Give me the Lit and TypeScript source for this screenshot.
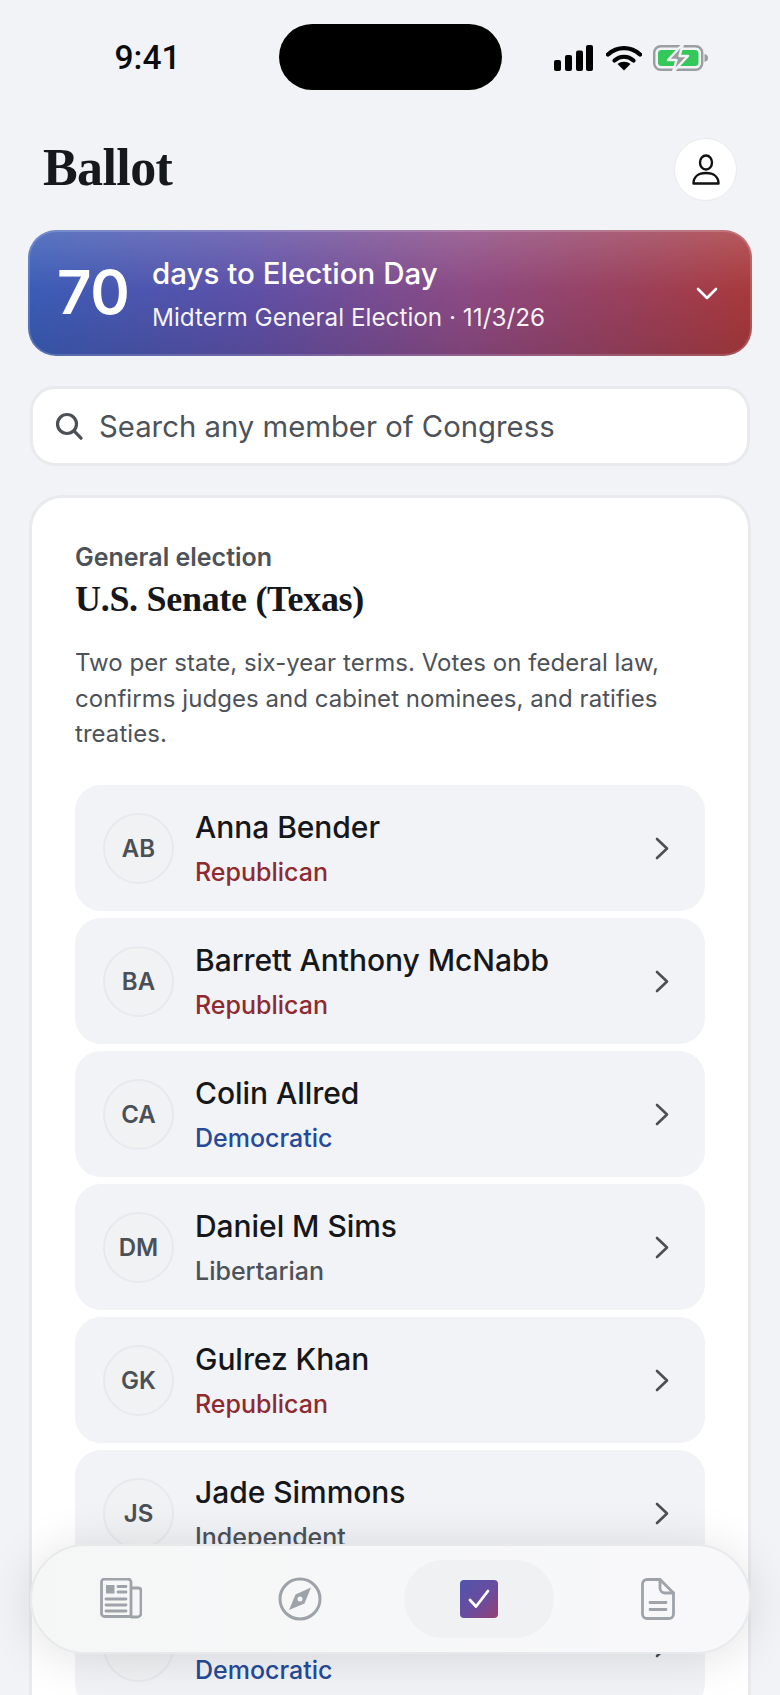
import { LitElement, css, html, svg } from 'lit';
import { customElement } from 'lit/decorators.js';

// Kandidaten der Liste (der letzte Name liegt hinter der Navigation und ist nicht lesbar)
const candidates = [
  { initials: 'AB', name: 'Anna Bender', party: 'Republican', kind: 'rep' },
  { initials: 'BA', name: 'Barrett Anthony McNabb', party: 'Republican', kind: 'rep' },
  { initials: 'CA', name: 'Colin Allred', party: 'Democratic', kind: 'dem' },
  { initials: 'DM', name: 'Daniel M Sims', party: 'Libertarian', kind: 'other' },
  { initials: 'GK', name: 'Gulrez Khan', party: 'Republican', kind: 'rep' },
  { initials: 'JS', name: 'Jade Simmons', party: 'Independent', kind: 'other' },
  { initials: '', name: '', party: 'Democratic', kind: 'dem' },
];

const chevronRight = svg`<path d="M2 2l10 9.5L2 21" fill="none" stroke="currentColor" stroke-width="2.6" stroke-linecap="round" stroke-linejoin="round"/>`;

@customElement('app-root')
export class AppRoot extends LitElement {
  static styles = css`
    :host {
      display: block;
      position: relative;
      height: 1695px;
      overflow: hidden;
      background: #f1f3f7;
      font-family: 'Inter', 'Liberation Sans', sans-serif;
      color: #15171a;
    }
    .status {
      padding-top: 24px;
      box-sizing: border-box;
      height: 114px;
      display: grid;
      grid-template-columns: 279px 223px 1fr;
    }
    .time {
      font: 500 33.5px Roboto, 'Liberation Sans', sans-serif;
      text-align: center;
      padding: 14px 0 0 16px;
      color: #0c0c0c;
    }
    .island {
      height: 66px;
      background: #000;
      border-radius: 33px;
    }
    .sys {
      display: flex;
      align-items: flex-start;
      padding: 21px 0 0 52px;
      gap: 11px;
    }
    .head {
      display: flex;
      justify-content: space-between;
      align-items: center;
      padding: 0 43px 0 43px;
      height: 116px;
    }
    h1 {
      margin: -10px 0 0;
      font: 700 52px 'Liberation Serif', serif;
      letter-spacing: -0.6px;
      color: #15181c;
    }
    .profile {
      width: 63px;
      height: 63px;
      margin-top: -6px;
      border-radius: 50%;
      background: #fff;
      border: 1px solid #e8eaee;
      box-sizing: border-box;
      display: flex;
      align-items: center;
      justify-content: center;
    }
    .banner {
      margin: 0 28px;
      height: 126px;
      box-sizing: border-box;
      border-radius: 28px;
      border: 2px solid rgba(255, 255, 255, 0.16);
      background:
        linear-gradient(180deg, rgba(255, 255, 255, 0.16), rgba(255, 255, 255, 0) 48%, rgba(0, 0, 0, 0.1)),
        linear-gradient(90deg, #3a5cb6 0%, #5d50a8 30%, #8b4a84 60%, #9c3f58 85%, #a8393c 100%);
      background-origin: border-box;
      color: #fff;
      display: flex;
      align-items: center;
      padding: 0 32px 0 27px;
    }
    .days {
      font-size: 60px;
      font-weight: 600;
      letter-spacing: -0.5px;
      width: 95px;
      padding-bottom: 3px;
    }
    .banner-text { flex: 1; }
    .banner-title {
      font-size: 29.5px;
      font-weight: 500;
      line-height: 36px;
      margin-bottom: 11px;
    }
    .banner-sub {
      font-size: 24.3px;
      line-height: 30px;
      color: rgba(255, 255, 255, 0.94);
    }
    .search {
      margin: 30px 30px 0;
      height: 80px;
      box-sizing: border-box;
      background: #fff;
      border: 3px solid #e8eaee;
      border-radius: 25px;
      display: flex;
      align-items: center;
      padding: 0 22px;
      gap: 16px;
      font-size: 29.3px;
      color: #4d5259;
    }
    .card {
      margin: 29px 29px 0;
      background: #fff;
      border: 3px solid #e8eaee;
      border-bottom: none;
      border-radius: 33px 33px 0 0;
      padding: 44px 43px 0;
    }
    .eyebrow {
      font-size: 25px;
      font-weight: 600;
      color: #4d5259;
      line-height: 30px;
    }
    h2 {
      margin: 5px 0 0;
      font: 700 36px/44px 'Liberation Serif', serif;
      letter-spacing: -0.3px;
      color: #15171a;
    }
    .blurb {
      margin: 24px 0 33.5px;
      font-size: 24px;
      line-height: 35.5px;
      letter-spacing: 0.05px;
      color: #4d5259;
    }
    .list {
      display: flex;
      flex-direction: column;
      gap: 7px;
    }
    .row {
      height: 126px;
      box-sizing: border-box;
      background: #f1f3f7;
      border-radius: 26px;
      display: flex;
      align-items: center;
      padding: 0 36px 0 28px;
    }
    .avatar {
      width: 71px;
      height: 71px;
      flex: none;
      box-sizing: border-box;
      border-radius: 50%;
      background: #f1f2f4;
      border: 2px solid #e8e9ec;
      color: #4b5056;
      font-size: 24px;
      font-weight: 600;
      display: flex;
      align-items: center;
      justify-content: center;
      margin-right: 21px;
    }
    .info { flex: 1; }
    .name {
      font-size: 30px;
      font-weight: 500;
      letter-spacing: -0.05px;
      line-height: 36px;
      min-height: 36px;
      color: #15171a;
      margin-bottom: 12px;
    }
    .party {
      font-size: 25px;
      font-weight: 500;
      line-height: 30px;
    }
    .rep { color: #8e2a30; }
    .dem { color: #264a97; }
    .other { color: #4d5259; }
    .chev { color: #4b5056; flex: none; display: block; }
    .nav {
      position: absolute;
      left: 30px;
      top: 1544px;
      width: 721px;
      height: 110px;
      box-sizing: border-box;
      border-radius: 55px;
      background: linear-gradient(90deg, #f5f6f6, #f8f8fa);
      border: 2px solid #e8e9eb;
      box-shadow: 0 4px 50px rgba(0, 0, 0, 0.12);
      display: flex;
      align-items: center;
      gap: 29px;
      padding: 0 14px;
    }
    .tab {
      width: 150px;
      height: 78px;
      border-radius: 39px;
      display: flex;
      align-items: center;
      justify-content: center;
      color: #9ea3aa;
    }
    .tab.active { background: #f0f1f3; }
  `;

  render() {
    return html`
      <div class="status">
        <div class="time">9:41</div>
        <div class="island"></div>
        <div class="sys">
          <svg width="40" height="26" viewBox="0 0 40 26">
            <rect x="0" y="15" width="7" height="11" rx="2"/>
            <rect x="11" y="10" width="7" height="16" rx="2"/>
            <rect x="22" y="5.5" width="7" height="20.5" rx="2"/>
            <rect x="32" y="0" width="7" height="26" rx="2"/>
          </svg>
          <svg width="36" height="26" viewBox="0 0 36 26" style="margin-left:1px">
            <path d="M2 9.5C11 1 25 1 34 9.5" fill="none" stroke="#000" stroke-width="4.4" stroke-linecap="round"/>
            <path d="M8.5 15.5c5.5-5 13.5-5 19 0" fill="none" stroke="#000" stroke-width="4.2" stroke-linecap="round"/>
            <path d="M18 25.5l-6.5-6.5c3.8-3 9.2-3 13 0z"/>
          </svg>
          <svg width="56" height="26" viewBox="0 0 56 26">
            <rect x="1.2" y="1.2" width="48" height="23.6" rx="6.5" fill="none" stroke="#9b9ea1" stroke-width="2.4"/>
            <rect x="5" y="5" width="40.5" height="16" rx="3.5" fill="#34c759"/>
            <path d="M51.5 9c2.5.6 3.6 2.2 3.6 4s-1.1 3.4-3.6 4z" fill="#9b9ea1"/>
            <path d="M30 -1L15 15h8.5L20 27l15-16h-8.5z" fill="#9b9ea1" stroke="#f1f3f7" stroke-width="2.4" stroke-linejoin="round"/>
          </svg>
        </div>
      </div>

      <div class="head">
        <h1>Ballot</h1>
        <div class="profile">
          <svg width="28" height="31" viewBox="0 0 28 31" fill="none" stroke="#111" stroke-width="2.4">
            <ellipse cx="14" cy="8.500" rx="6" ry="7"/>
            <path d="M1.500 29.500c0-6.500 4.500-10.500 12.500-10.500s12.500 4 12.500 10.500z" stroke-linejoin="round"/>
          </svg>
        </div>
      </div>

      <div class="banner">
        <div class="days">70</div>
        <div class="banner-text">
          <div class="banner-title">days to Election Day</div>
          <div class="banner-sub">Midterm General Election · 11/3/26</div>
        </div>
        <svg width="22" height="13" viewBox="0 0 22 13" fill="none" stroke="#fff" stroke-width="2.6" stroke-linecap="round" stroke-linejoin="round"><path d="M2 2l9 9 9-9"/></svg>
      </div>

      <div class="search">
        <svg width="28" height="28" viewBox="0 0 28 28" fill="none" stroke="#4b5056" stroke-width="3.2" stroke-linecap="round"><circle cx="12" cy="12" r="9.500"/><path d="M19.200 19.200l6.800 7"/></svg>
        <span>Search any member of Congress</span>
      </div>

      <div class="card">
        <div class="eyebrow">General election</div>
        <h2>U.S. Senate (Texas)</h2>
        <p class="blurb">Two per state, six-year terms. Votes on federal law, confirms judges and cabinet nominees, and ratifies treaties.</p>
        <div class="list">
          ${candidates.map(
            (c) => html`
              <div class="row">
                <div class="avatar">${c.initials}</div>
                <div class="info">
                  <div class="name">${c.name}</div>
                  <div class="party ${c.kind}">${c.party}</div>
                </div>
                <svg class="chev" width="14" height="23" viewBox="0 0 14 23">${chevronRight}</svg>
              </div>
            `,
          )}
        </div>
      </div>

      <nav class="nav">
        <div class="tab">
          <svg width="42" height="42" viewBox="0 0 42 42" fill="none" stroke="currentColor" stroke-width="2.8" stroke-linejoin="round">
            <path d="M31 6.500v32H4.500a3 3 0 0 1-3-3V4a3 3 0 0 1 3-3h23.500a3 3 0 0 1 3 3z"/>
            <path d="M31 10h7.500a2.500 2.500 0 0 1 2.500 2.500V35a4 4 0 0 1-4 4H31"/>
            <rect x="6" y="7" width="8.500" height="8.500" fill="currentColor" stroke="none"/>
            <path d="M18 8.500h8M18 14h8M6 21h20M6 27h20M6 33h20" stroke-linecap="round"/>
          </svg>
        </div>
        <div class="tab">
          <svg width="44" height="44" viewBox="0 0 44 44">
            <circle cx="22" cy="22" r="20" fill="none" stroke="currentColor" stroke-width="3"/>
            <path fill-rule="evenodd" fill="currentColor" d="M33 10.500L26.500 26.500 11 33l6.500-15.500zM22 19.500a2.500 2.500 0 1 0 0 5 2.500 2.500 0 0 0 0-5z"/>
          </svg>
        </div>
        <div class="tab active">
          <svg width="38" height="38" viewBox="0 0 38 38">
            <defs>
              <linearGradient id="chk" x1="0" y1="0" x2="1" y2="1">
                <stop offset="0" stop-color="#4f54ab"/>
                <stop offset="0.55" stop-color="#6a4c9f"/>
                <stop offset="1" stop-color="#964070"/>
              </linearGradient>
            </defs>
            <rect width="38" height="38" rx="4" fill="url(#chk)"/>
            <path d="M10 20l6 6.500L28 11" fill="none" stroke="#fff" stroke-width="2.8" stroke-linecap="round" stroke-linejoin="round"/>
          </svg>
        </div>
        <div class="tab">
          <svg width="34" height="42" viewBox="0 0 34 42" fill="none" stroke="currentColor" stroke-width="2.8" stroke-linejoin="round" stroke-linecap="round">
            <path d="M19 1.500H6a4.500 4.500 0 0 0-4.500 4.500v30a4.500 4.500 0 0 0 4.500 4.500h22a4.500 4.500 0 0 0 4.500-4.500V15z"/>
            <path d="M19 1.500V10a5 5 0 0 0 5 5h8.500"/>
            <path d="M9 24.500h16M9 31.500h16"/>
          </svg>
        </div>
      </nav>
    `;
  }
}
